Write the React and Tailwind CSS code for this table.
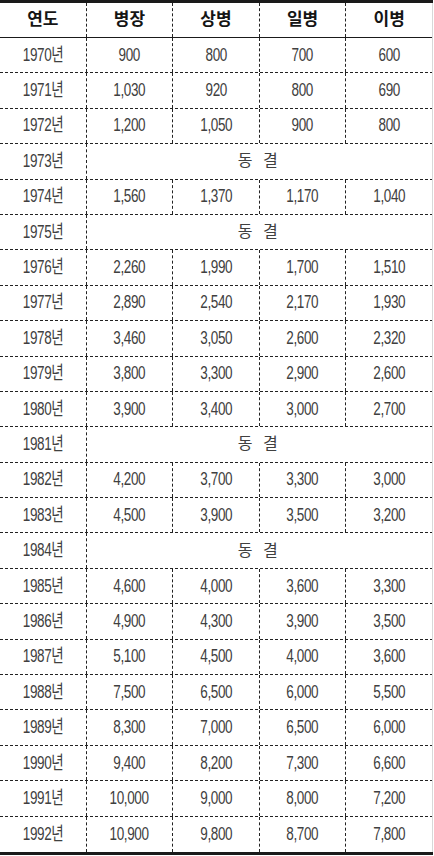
const rows = [
  ['1970', '900', '800', '700', '600'],
  ['1971', '1,030', '920', '800', '690'],
  ['1972', '1,200', '1,050', '900', '800'],
  ['1973'],
  ['1974', '1,560', '1,370', '1,170', '1,040'],
  ['1975'],
  ['1976', '2,260', '1,990', '1,700', '1,510'],
  ['1977', '2,890', '2,540', '2,170', '1,930'],
  ['1978', '3,460', '3,050', '2,600', '2,320'],
  ['1979', '3,800', '3,300', '2,900', '2,600'],
  ['1980', '3,900', '3,400', '3,000', '2,700'],
  ['1981'],
  ['1982', '4,200', '3,700', '3,300', '3,000'],
  ['1983', '4,500', '3,900', '3,500', '3,200'],
  ['1984'],
  ['1985', '4,600', '4,000', '3,600', '3,300'],
  ['1986', '4,900', '4,300', '3,900', '3,500'],
  ['1987', '5,100', '4,500', '4,000', '3,600'],
  ['1988', '7,500', '6,500', '6,000', '5,500'],
  ['1989', '8,300', '7,000', '6,500', '6,000'],
  ['1990', '9,400', '8,200', '7,300', '6,600'],
  ['1991', '10,000', '9,000', '8,000', '7,200'],
  ['1992', '10,900', '9,800', '8,700', '7,800'],
];

const headers = ['연도', '병장', '상병', '일병', '이병'];

const font = { fontFamily: '"Liberation Sans", "Noto Sans CJK KR", sans-serif' };

const App = () => {
  return (
    <div className="w-[434px] h-[856px] bg-white" style={font}>
      <div className="w-[433px] border-t-[3px] border-b-[3px] border-[#1a1a1a] relative">
        {/* light edge on the right */}
        <div className="absolute right-0 top-0 bottom-0 w-px bg-[#d8d8d8]" />
        {/* header */}
        <div className="flex h-[35px] border-b border-[#1a1a1a] pr-px">
          {headers.map((h, i) => (
            <div
              key={h}
              className={`flex-1 flex items-center justify-center text-[17px] font-bold text-[#151515] ${i < 4 ? 'border-r border-dashed border-[#222]' : ''}`}
            >
              {h}
            </div>
          ))}
        </div>

        {rows.map((r, idx) => (
          <div
            key={r[0]}
            className={`flex h-[35.4px] pr-px text-[#404040] text-[18px] ${idx < rows.length - 1 ? 'border-b border-dashed border-[#222]' : ''}`}
          >
            <div className="w-[86.6px] shrink-0 flex items-center justify-center border-r border-dashed border-[#222]">
              <span className="inline-block scale-x-75 tracking-[-0.5px]">{r[0]}년</span>
            </div>
            {r.length === 1 ? (
              <div className="flex-1 flex items-center justify-center text-[16px] tracking-[3px]">동 결</div>
            ) : (
              r.slice(1).map((v, i) => (
                <div
                  key={i}
                  className={`flex-1 flex items-center justify-center ${i < 3 ? 'border-r border-dashed border-[#222]' : ''}`}
                >
                  <span className="inline-block scale-x-75 tracking-[-0.5px]">{v}</span>
                </div>
              ))
            )}
          </div>
        ))}
      </div>
    </div>
  );
};

export default App;
